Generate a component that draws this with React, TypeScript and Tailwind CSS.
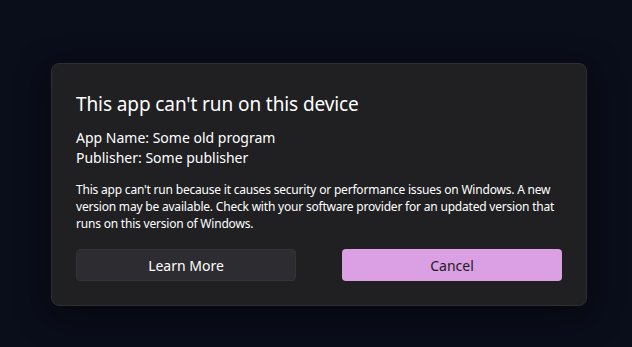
import React from "react";

export default function App() {
  return (
    <div
      className="w-[632px] h-[347px] bg-[#0a0d1a] overflow-hidden pt-[63px] pl-[51px]"
      style={{ fontFamily: '"Noto Sans", "Open Sans", sans-serif' }}
    >
      <div className="w-[536px] h-[243px] rounded-[8px] border border-[#2e2e33] bg-[#202023] pl-[24px] pr-[22px] pt-[26px] shadow-[0_8px_32px_rgba(0,0,0,0.5)] flex flex-col">
        <h1 className="text-[19px] leading-[28px] text-[#ffffff] tracking-[-0.1px]">
          This app can't run on this device
        </h1>
        <div className="mt-[10px] text-[14px] leading-[20px] text-[#ffffff]">
          <div>App Name: Some old program</div>
          <div>Publisher: Some publisher</div>
        </div>
        <p className="mt-[13px] text-[12px] leading-[17px] text-[#ffffff] tracking-[-0.2px]">
          This app can't run because it causes security or performance issues on Windows. A new
          version may be available. Check with your software provider for an updated version that
          runs on this version of Windows.
        </p>
        <div className="mt-[17px] flex gap-[46px]">
          <button className="w-[220px] h-[32px] rounded-[4px] bg-[#2d2d31] border border-[#333337] text-[14px] text-[#ffffff]">
            Learn More
          </button>
          <button className="w-[220px] h-[32px] rounded-[4px] bg-[#daa0e3] text-[14px] text-[#1b1b1b]">
            Cancel
          </button>
        </div>
      </div>
    </div>
  );
}
